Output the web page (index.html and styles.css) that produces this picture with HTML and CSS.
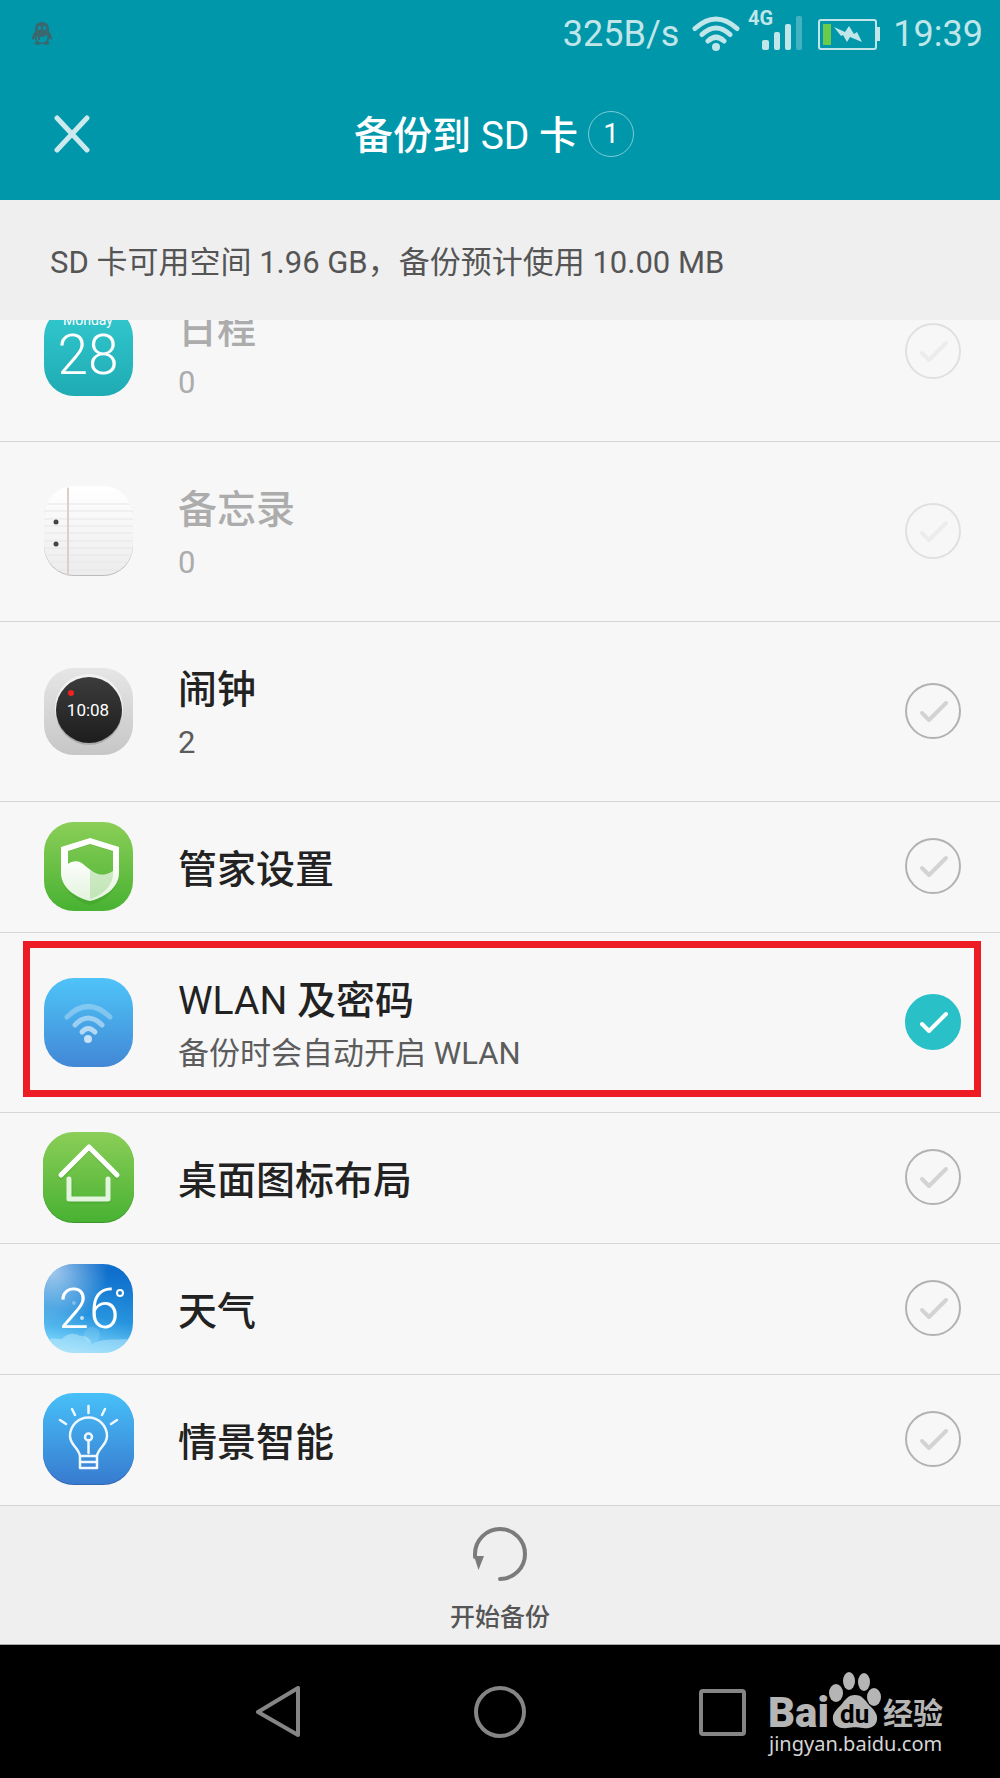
FILE: index.html
```html
<!DOCTYPE html>
<html lang="zh-CN">
<head>
    <meta charset="UTF-8">
    <meta name="viewport" content="width=device-width, initial-scale=1.0">
    <title>备份到 SD 卡</title>
    <link rel="stylesheet" href="styles.css">
</head>
<body>
    <!-- shared gradients and the tick shape -->
    <svg class="defs" width="0" height="0" aria-hidden="true">
        <defs>
            <linearGradient id="teal" x1="0" y1="0" x2="0" y2="1">
                <stop offset="0" stop-color="#33c9cf"/><stop offset="1" stop-color="#1fabb4"/>
            </linearGradient>
            <linearGradient id="paper" x1="0" y1="0" x2="0" y2="1">
                <stop offset="0" stop-color="#ffffff"/><stop offset="1" stop-color="#ececec"/>
            </linearGradient>
            <linearGradient id="silver" x1="0" y1="0" x2="0" y2="1">
                <stop offset="0" stop-color="#e6e6e6"/><stop offset="1" stop-color="#c6c6c6"/>
            </linearGradient>
            <linearGradient id="dial" x1="0" y1="0" x2="0" y2="1">
                <stop offset="0" stop-color="#3c3c3c"/><stop offset="1" stop-color="#1d1d1d"/>
            </linearGradient>
            <linearGradient id="green" x1="0" y1="0" x2="0" y2="1">
                <stop offset="0" stop-color="#8bce58"/><stop offset="1" stop-color="#48b232"/>
            </linearGradient>
            <linearGradient id="blue" x1="0" y1="0" x2="0" y2="1">
                <stop offset="0" stop-color="#4fc3f9"/><stop offset="0.35" stop-color="#4ab0ec"/><stop offset="1" stop-color="#4287d6"/>
            </linearGradient>
            <linearGradient id="bulb" x1="0" y1="0" x2="0" y2="1">
                <stop offset="0" stop-color="#47c0f9"/><stop offset="1" stop-color="#387bcf"/>
            </linearGradient>
            <linearGradient id="sky" x1="0.2" y1="0" x2="0" y2="1">
                <stop offset="0" stop-color="#0f6fcc"/><stop offset="0.5" stop-color="#2794de"/><stop offset="0.8" stop-color="#6bcaf7"/><stop offset="1" stop-color="#a5e0fb"/>
            </linearGradient>
            <radialGradient id="sun" cx="0.12" cy="0.1" r="0.6">
                <stop offset="0" stop-color="#fff" stop-opacity="0.6"/><stop offset="1" stop-color="#fff" stop-opacity="0"/>
            </radialGradient>
            <linearGradient id="shield" x1="0" y1="0" x2="0" y2="1">
                <stop offset="0.3" stop-color="#fff"/><stop offset="1" stop-color="#e3f3dd"/>
            </linearGradient>
            <clipPath id="tile"><rect x="2" y="2" width="89" height="89" rx="30"/></clipPath>
            <symbol id="tick" viewBox="0 0 56 56">
                <path d="M17 30l7 7 17-17" fill="none" stroke="currentColor" stroke-width="4" stroke-linecap="round" stroke-linejoin="round"/>
            </symbol>
        </defs>
    </svg>

    <header class="header">
        <div class="status-bar">
            <svg class="qq" width="20" height="24" viewBox="0 0 20 24">
                <path fill="#39686f" fill-rule="evenodd" d="M10 0C5.500 0 3 3 3 7v2.500C1 12 0 14.500 0 17c.5 1 1.500.5 2.500-1 .3 1.500.9 2.600 1.700 3.500C3 20 2.500 21 2.500 22c1.500 1.200 5 1 7.500-.5 2.500 1.500 6 1.700 7.500.5 0-1-.5-2-1.700-2.500.8-.9 1.400-2 1.700-3.500 1 1.500 2 2 2.500 1 0-2.500-1-5-3-7.500V7c0-4-2.500-7-7-7zM7.500 4c2 0 2 4 0 4s-2-4 0-4zm5 0c2 0 2 4 0 4s-2-4 0-4zM5 14c3 1.300 7 1.300 10-1 1.200 4-.5 7.500-5 7.500S4 17.500 5 14z"/>
                <path d="M7 13v5" stroke="#39686f" stroke-width="2"/>
            </svg>
            <span class="speed">325B/s</span>
            <svg class="wifi" width="48" height="36" viewBox="0 0 48 36" fill="none" stroke="currentColor" stroke-width="5" stroke-linecap="round">
                <path d="M3 12.500Q24-6.500 45 12.500M10 18.500Q24 5.500 38 18.500M16 25Q24 17.500 32 25"/>
                <circle cx="24" cy="31" r="4" fill="currentColor" stroke="none"/>
            </svg>
            <svg class="signal" width="56" height="42" viewBox="0 0 56 42" fill="currentColor">
                <text x="0" y="16" font-size="20" font-weight="700">4G</text>
                <rect x="14" y="31" width="7" height="10" rx="2"/>
                <rect x="26" y="23" width="6" height="18" rx="2"/>
                <rect x="37" y="15" width="6" height="26" rx="2"/>
                <rect x="48" y="7" width="6" height="34" rx="2" opacity="0.35"/>
            </svg>
            <svg class="battery" width="62" height="31" viewBox="0 0 62 31">
                <rect x="1" y="1" width="57" height="29" rx="2" fill="none" stroke="currentColor" stroke-width="2"/>
                <path d="M59 8h3v14h-3z" fill="currentColor"/>
                <rect x="5" y="5" width="8" height="21" fill="#6ccb4b"/>
                <path fill="currentColor" d="M16 8l11 5 4-6 5 8 3-2 5 10-12-5-3 5-4-7-2 1z"/>
            </svg>
            <span class="time">19:39</span>
        </div>
        <div class="app-bar">
            <button class="close" type="button" aria-label="关闭">
                <svg width="36" height="38" viewBox="0 0 36 38" stroke="#cceaee" stroke-width="5" stroke-linecap="round">
                    <path d="M3 3l30 32M33 3L3 35"/>
                </svg>
            </button>
            <div class="title">
                <h1>备份到 <span class="latin">SD</span> 卡</h1>
                <span class="count">1</span>
            </div>
        </div>
    </header>

    <p class="space-info">SD 卡可用空间 1.96 GB，备份预计使用 10.00 MB</p>

    <main class="list">
        <label class="row tall disabled">
            <svg class="icon" viewBox="0 0 92 92">
                <rect x="2" y="2" width="89" height="89" rx="30" fill="url(#teal)"/>
                <text x="46" y="20" font-size="14" text-anchor="middle" fill="#fff">Monday</text>
                <text x="46" y="69" font-size="55" font-weight="300" text-anchor="middle" fill="#fff">28</text>
            </svg>
            <span class="text"><span class="name">日程</span><span class="detail">0</span></span>
            <span class="check"><input type="checkbox" disabled><svg><use href="#tick"/></svg></span>
        </label>
        <label class="row tall disabled">
            <svg class="icon" viewBox="0 0 92 92">
                <rect x="2" y="2" width="89" height="89" rx="30" fill="#bbb"/>
                <rect x="2" y="1" width="89" height="89" rx="30" fill="url(#paper)"/>
                <g clip-path="url(#tile)">
                    <path d="M0 19h92M0 26h92M0 34h92M0 41h92M0 48h92M0 56h92M0 63h92M0 70h92M0 77h92M0 85h92" stroke="#e6e6ec"/>
                    <path d="M26 2v88" stroke="#dccfcb" stroke-width="2"/>
                </g>
                <circle cx="14" cy="37" r="2.500" fill="#444"/>
                <circle cx="14" cy="59" r="2.500" fill="#444"/>
            </svg>
            <span class="text"><span class="name">备忘录</span><span class="detail">0</span></span>
            <span class="check"><input type="checkbox" disabled><svg><use href="#tick"/></svg></span>
        </label>
        <label class="row tall">
            <svg class="icon" viewBox="0 0 92 92">
                <rect x="2" y="3" width="89" height="87" rx="30" fill="url(#silver)"/>
                <circle cx="47" cy="43" r="34" fill="#f1f1f1"/>
                <circle cx="47" cy="47" r="33" fill="#aaa"/>
                <circle cx="47" cy="45" r="33" fill="url(#dial)"/>
                <circle cx="29" cy="28" r="3" fill="#ee2222"/>
                <text x="46" y="51" font-size="17" text-anchor="middle" fill="#fff">10:08</text>
            </svg>
            <span class="text"><span class="name">闹钟</span><span class="detail">2</span></span>
            <span class="check"><input type="checkbox"><svg><use href="#tick"/></svg></span>
        </label>
        <label class="row">
            <svg class="icon" viewBox="0 0 92 92">
                <rect x="2" y="2" width="89" height="89" rx="30" fill="url(#green)"/>
                <path d="M48 22l26 8v25c0 12-11 23-26 28-15-5-26-16-26-28V30z" fill="none" stroke="#2f8a20" stroke-opacity="0.25" stroke-width="5"/>
                <path fill-rule="evenodd" fill="url(#shield)" d="M48 18l29 9v26c0 13-12 24-29 28-17-4-29-15-29-28V27zM48 24l-22 7v13c4-3 10-4 15 0 11 9 18 15 30 7V31z"/>
                <path d="M48 49c9 7 15 7 23 2v3c0 11-10 21-23 25z" fill="#8fd07b" opacity="0.4"/>
            </svg>
            <span class="text"><span class="name">管家设置</span></span>
            <span class="check"><input type="checkbox"><svg><use href="#tick"/></svg></span>
        </label>
        <label class="row tall marked">
            <svg class="icon" viewBox="0 0 92 92">
                <rect x="2" y="2" width="89" height="89" rx="30" fill="url(#blue)"/>
                <g fill="none" stroke="#fff" stroke-linecap="round" stroke-width="5">
                    <path d="M25 41Q46 20 68 41" opacity="0.3"/>
                    <path d="M33 49Q46 35 60 49" opacity="0.45"/>
                    <path d="M40 56Q46 49 53 56" opacity="0.6"/>
                </g>
                <circle cx="46" cy="63" r="4" fill="#fff" opacity="0.7"/>
            </svg>
            <span class="text"><span class="name"><span class="latin">WLAN</span> 及密码</span><span class="detail">备份时会自动开启 WLAN</span></span>
            <span class="check"><input type="checkbox" checked><svg><use href="#tick"/></svg></span>
        </label>
        <label class="row">
            <svg class="icon" viewBox="0 0 92 92">
                <rect x="1" y="2" width="91" height="90" rx="31" fill="#3c962a"/>
                <rect x="1" y="1" width="91" height="90" rx="31" fill="url(#green)"/>
                <g fill="none" stroke-width="5" stroke-linecap="round" stroke-linejoin="round">
                    <path d="M19 46l28-29 28 29M28 49v21h38V49" stroke="#2f8a20" stroke-opacity="0.25"/>
                    <path d="M19 44l28-28 28 28" stroke="#fff"/>
                    <path d="M27 48v20h39V48" stroke="#e3f4df"/>
                </g>
            </svg>
            <span class="text"><span class="name">桌面图标布局</span></span>
            <span class="check"><input type="checkbox"><svg><use href="#tick"/></svg></span>
        </label>
        <label class="row">
            <svg class="icon" viewBox="0 0 92 92">
                <g clip-path="url(#tile)">
                    <rect width="92" height="92" fill="url(#sky)"/>
                    <rect width="92" height="92" fill="url(#sun)"/>
                    <path fill="#d8f2fd" opacity="0.4" d="M0 80c8-5 14-3 20-3 4-5 12-7 18-3 7-1 10 3 12 8 10-6 25-4 42-5v15H0z"/>
                    <circle cx="50" cy="73" r="8" fill="#fff" opacity="0.12"/>
                    <circle cx="40" cy="56" r="2" fill="#fff" opacity="0.7"/>
                    <circle cx="32" cy="41" r="2" fill="#fff" opacity="0.3"/>
                </g>
                <text x="47" y="66" font-size="55" font-weight="300" text-anchor="middle" fill="#fff">26</text>
                <circle cx="78" cy="31" r="3" fill="none" stroke="#fff" stroke-width="2"/>
            </svg>
            <span class="text"><span class="name">天气</span></span>
            <span class="check"><input type="checkbox"><svg><use href="#tick"/></svg></span>
        </label>
        <label class="row">
            <svg class="icon" viewBox="0 0 92 92">
                <rect x="1" y="1" width="91" height="91" rx="31" fill="#2f69b3"/>
                <rect x="1" y="0" width="91" height="91" rx="31" fill="url(#bulb)"/>
                <g fill="none" stroke="#f0f8ff" stroke-width="2.500" stroke-linecap="round" stroke-linejoin="round">
                    <path d="M38 63c-1-8-10-11-10-20a18.500 18.500 0 0 1 37 0c0 9-9 12-10 20zM38 63v12h17V63M38 69h17M46.500 47v13"/>
                    <circle cx="46.500" cy="44" r="3.500"/>
                    <path d="M46.500 13v7M30 16l3 6M63 16l-3 6M18 27l6 4M75 27l-6 4"/>
                </g>
            </svg>
            <span class="text"><span class="name">情景智能</span></span>
            <span class="check"><input type="checkbox"><svg><use href="#tick"/></svg></span>
        </label>
    </main>

    <footer class="toolbar">
        <button class="start" type="button">
            <svg width="56" height="56" viewBox="0 0 56 56">
                <path d="M28 53a25 25 0 1 0-25-25v3" fill="none" stroke="#7b7b7b" stroke-width="4" stroke-linecap="round"/>
                <path d="M2 30h10L6.500 44z" fill="#7b7b7b"/>
            </svg>
            <span>开始备份</span>
        </button>
    </footer>

    <nav class="nav-bar">
        <button type="button" aria-label="返回">
            <svg viewBox="0 0 52 52"><path d="M46 2v47L6 26z"/></svg>
        </button>
        <button type="button" aria-label="主页">
            <svg viewBox="0 0 52 52"><circle cx="26" cy="26" r="24"/></svg>
        </button>
        <button type="button" aria-label="最近任务">
            <svg viewBox="0 0 52 52"><rect x="5" y="5" width="43" height="43" rx="2"/></svg>
        </button>
        <svg class="watermark" width="184" height="90" viewBox="0 0 184 90">
            <g fill="#b5b5b5">
                <text x="3" y="57" font-size="42" font-weight="900">Bai</text>
                <ellipse cx="71" cy="23" rx="7" ry="9"/>
                <ellipse cx="84" cy="11" rx="6" ry="9"/>
                <ellipse cx="99" cy="12" rx="6" ry="9"/>
                <ellipse cx="109" cy="27" rx="7" ry="9"/>
                <path d="M90 25c7 0 10 5 14 10 5 5 9 9 8 15-1 7-8 9-14 8-6-1-10-1-16 0-7 1-13-2-14-8-1-7 4-11 8-15 4-5 7-10 14-10z"/>
                <text class="jingyan" x="118" y="54" font-size="30" font-weight="700">经验</text>
            </g>
            <text x="75" y="53" font-size="26" font-weight="700" fill="#000">du</text>
            <text class="url" x="4" y="81" font-size="20" fill="#d6d6d6">jingyan.baidu.com</text>
        </svg>
    </nav>
</body>
</html>
```

FILE: styles.css
```css
* {
    box-sizing: border-box;
}
body {
    margin: 0;
    height: 100vh;
    display: flex;
    flex-direction: column;
    background-color: #f7f7f7;
    color: #222;
    font-family: Roboto, "Noto Sans CJK SC", sans-serif;
}
button {
    padding: 0;
    border: 0;
    background: none;
    font-family: inherit;
}
svg {
    display: block;
    flex: none;
}
.defs {
    position: absolute;
}
.latin {
    font-weight: 400;
}

/* header */
.header {
    background-color: #0097ab;
    color: #fff;
}
.status-bar {
    display: flex;
    align-items: center;
    height: 68px;
    padding: 0 17px 0 32px;
    color: #c0e6ea;
    font-size: 36px;
}
.speed {
    margin-left: auto;
}
.wifi {
    margin-left: 13px;
}
.signal {
    margin: 0 14px 8px 8px;
    overflow: visible;
}
.time {
    margin-left: 13px;
}
.app-bar {
    display: grid;
    grid-template-columns: 1fr auto 1fr;
    align-items: center;
    height: 132px;
    padding: 0 66px 0 54px;
}
.close {
    justify-self: start;
}
.title {
    display: flex;
    align-items: center;
    gap: 10px;
}
.title h1 {
    margin: 0;
    padding-bottom: 4px;
    font-size: 39px;
    font-weight: 500;
}
.count {
    width: 46px;
    height: 46px;
    border: 1px solid #7fcbd5;
    border-radius: 50%;
    font-size: 28px;
    line-height: 44px;
    text-align: center;
}
.space-info {
    flex: none;
    margin: 0;
    padding: 6px 50px 0;
    background-color: #efefef;
    color: #555;
    font-size: 31px;
    line-height: 114px;
}

/* list, scrolled to its end */
.list {
    flex: 1;
    min-height: 0;
    display: flex;
    flex-direction: column;
    justify-content: flex-end;
    overflow: hidden;
}
.row {
    position: relative;
    flex: none;
    display: flex;
    align-items: center;
    gap: 44px;
    height: 131px;
    padding: 0 39px 2px 42px;
    border-bottom: 1px solid #d6d6d6;
}
.tall {
    height: 180px;
}
.icon {
    width: 92px;
    height: 92px;
}
.text {
    flex: 1;
    display: flex;
    flex-direction: column;
    padding-top: 8px;
}
.name {
    font-size: 39px;
    font-weight: 500;
    line-height: 56px;
}
.detail {
    color: #5c5c5c;
    font-size: 31px;
    line-height: 50px;
}
.disabled .name,
.disabled .detail {
    color: #acacac;
}
.marked::after {
    content: "";
    position: absolute;
    top: 8px;
    right: 19px;
    bottom: 15px;
    left: 23px;
    border: 7px solid #ed1c24;
}
.check {
    display: grid;
    color: #d3d3d3;
}
.check input,
.check svg {
    grid-area: 1 / 1;
    width: 56px;
    height: 56px;
    margin: 0;
}
.check svg {
    z-index: 1;
    pointer-events: none;
}
.check input {
    appearance: none;
    border: 2px solid #b2b2b2;
    border-radius: 50%;
}
.check input:checked {
    border-color: #29c0c8;
    background-color: #29c0c8;
}
.check input:checked + svg {
    color: #fff;
}
.disabled .check {
    color: #ececec;
}
.disabled .check input {
    border-color: #e0e0e0;
}

/* bottom */
.toolbar {
    flex: none;
    display: flex;
    justify-content: center;
    height: 139px;
    padding-top: 20px;
    background-color: #efefef;
    border-bottom: 1px solid #a8a8a8;
}
.start {
    display: flex;
    flex-direction: column;
    align-items: center;
    gap: 16px;
    color: #555;
    font-size: 25px;
    font-weight: 500;
    line-height: 40px;
}
.nav-bar {
    position: relative;
    flex: none;
    display: flex;
    align-items: center;
    justify-content: center;
    gap: 170px;
    height: 133px;
    background-color: #000;
}
.nav-bar button svg {
    width: 52px;
    height: 52px;
    fill: none;
    stroke: #858585;
    stroke-width: 4;
    stroke-linejoin: round;
}
.watermark {
    position: absolute;
    right: 51px;
    bottom: 18px;
    overflow: visible;
}
.jingyan {
    font-family: "Noto Sans CJK SC", sans-serif;
}
.url {
    font-family: "Noto Sans", sans-serif;
}
```
